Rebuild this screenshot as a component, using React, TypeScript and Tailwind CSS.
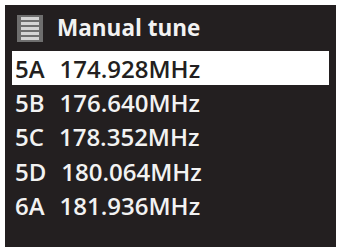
import React from "react";

const rows = [
  { ch: "5A", f: "174.928MHz" },
  { ch: "5B", f: "176.640MHz" },
  { ch: "5C", f: "178.352MHz" },
  { ch: "5D", f: "180.064MHz" },
  { ch: "6A", f: "181.936MHz" },
];

function ListIcon() {
  return (
    <div className="w-[26px] h-[27px] bg-[#6e6e6e] flex flex-col justify-center gap-[2px] px-[4px]">
      <div className="h-[3px] bg-[#d4d4d4]" />
      <div className="h-[3px] bg-[#d4d4d4]" />
      <div className="h-[3px] bg-[#d4d4d4]" />
      <div className="h-[3px] bg-[#d4d4d4]" />
      <div className="h-[3px] bg-[#d4d4d4]" />
    </div>
  );
}

export default function App() {
  return (
    <div className="w-[339px] h-[251px] bg-white p-[5px] pr-[3px] pb-[4px]" style={{ fontFamily: '"Open Sans", sans-serif' }}>
      <div className="w-full h-full bg-[#231f20] flex flex-col">
        <div className="h-[46px] flex items-center pl-[12px] gap-[14px]">
          <ListIcon />
          <span className="text-[22.5px] font-bold text-[#f2f2f2] leading-none">Manual tune</span>
        </div>
        <div className="flex flex-col px-[7px]">
          {rows.map((r, i) => (
            <div
              key={r.ch}
              className={
                i === 0
                  ? "h-[34px] bg-white text-[#231f20] flex items-center pl-[3px] pt-[1px] text-[24px] font-semibold leading-none"
                  : "h-[34.5px] text-[#f2f2f2] flex items-center pl-[3px] pt-[1px] text-[24px] font-semibold leading-none"
              }
            >
              <span>{r.ch}</span>
              <span className="ml-[15px]">{r.f}</span>
            </div>
          ))}
        </div>
      </div>
    </div>
  );
}
